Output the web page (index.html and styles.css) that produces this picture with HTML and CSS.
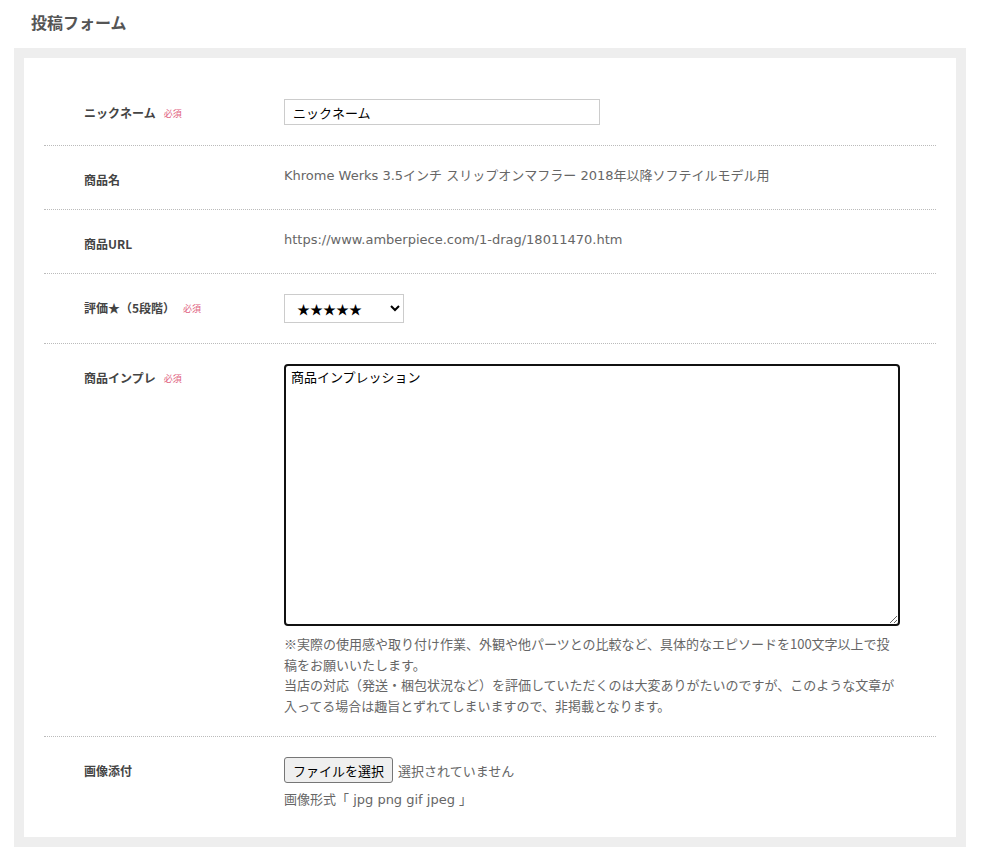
FILE: index.html
```html
<!DOCTYPE html>
<html lang="ja">
<head>
<meta charset="utf-8">
<title>投稿フォーム</title>
<link rel="stylesheet" href="styles.css">
</head>
<body>
<div class="page">
  <h2 class="title">投稿フォーム</h2>
  <div class="box">
    <form class="form">
      <div class="row">
        <div class="label">ニックネーム<span class="req">必須</span></div>
        <div class="value"><input class="text-input" type="text" value="ニックネーム"></div>
      </div>
      <div class="row">
        <div class="label">商品名</div>
        <div class="value"><p class="plain">Khrome Werks 3.5インチ スリップオンマフラー 2018年以降ソフテイルモデル用</p></div>
      </div>
      <div class="row">
        <div class="label">商品URL</div>
        <div class="value"><p class="plain">https://www.amberpiece.com/1-drag/18011470.htm</p></div>
      </div>
      <div class="row">
        <div class="label">評価★（5段階）<span class="req">必須</span></div>
        <div class="value">
          <select class="rating">
            <option>★★★★★</option>
            <option>★★★★</option>
            <option>★★★</option>
            <option>★★</option>
            <option>★</option>
          </select>
        </div>
      </div>
      <div class="row">
        <div class="label">商品インプレ<span class="req">必須</span></div>
        <div class="value">
          <textarea class="impression">商品インプレッション</textarea>
          <p class="note">※実際の使用感や取り付け作業、外観や他パーツとの比較など、具体的なエピソードを100文字以上で投稿をお願いいたします。<br>当店の対応（発送・梱包状況など）を評価していただくのは大変ありがたいのですが、このような文章が入ってる場合は趣旨とずれてしまいますので、非掲載となります。</p>
        </div>
      </div>
      <div class="row row-last">
        <div class="label">画像添付</div>
        <div class="value">
          <div class="file">
            <button type="button" class="file-btn">ファイルを選択</button>
            <span class="file-name">選択されていません</span>
          </div>
          <p class="note note-format">画像形式「 jpg png gif jpeg 」</p>
        </div>
      </div>
    </form>
  </div>
</div>
</body>
</html>
```

FILE: styles.css
```css
* {
  box-sizing: border-box;
}

html, body {
  margin: 0;
  padding: 0;
  background: #fff;
}

body {
  font-family: "Noto Sans CJK JP", sans-serif;
  color: #555;
}

.page {
  width: 952px;
  margin-left: 14px;
  padding-top: 12px;
}

.title {
  margin: 0 0 15px 17px;
  font-size: 16px;
  line-height: 21px;
  font-weight: bold;
  color: #555;
}

.box {
  border: 10px solid #eeeeee;
  background: #fff;
  padding: 21px 20px 6px 20px;
}

.row {
  display: flex;
  padding: 20px 0 20px 40px;
  border-bottom: 1px dotted #bbb;
}

.row-last {
  border-bottom: none;
}

.label {
  width: 200px;
  flex: none;
  font-size: 12px;
  line-height: 18px;
  padding-top: 5px;
  font-weight: bold;
  color: #444;
}

.req {
  font-size: 9px;
  font-weight: normal;
  color: #e0607e;
  margin-left: 8px;
  vertical-align: 1px;
}

.value {
  flex: 1;
  min-width: 0;
}

.plain {
  margin: 0;
  font-family: "DejaVu Sans", "Noto Sans CJK JP", sans-serif;
  font-size: 13px;
  line-height: 20px;
  height: 20px;
  color: #666;
}

.text-input {
  display: block;
  width: 316px;
  height: 26px;
  border: 1px solid #ccc;
  padding: 0 8px;
  font-family: "Noto Sans CJK JP", sans-serif;
  font-size: 13px;
  color: #000;
  background: #fff;
  border-radius: 0;
  outline: none;
}

.rating {
  display: block;
  width: 120px;
  height: 29px;
  border: 1px solid #ccc;
  border-radius: 0;
  background: #fff;
  padding: 0 8px;
  font-family: "Noto Sans CJK JP", sans-serif;
  font-size: 13px;
  color: #000;
  outline: none;
}

.impression {
  display: block;
  width: 616px;
  height: 262px;
  border: 2px solid #111;
  border-radius: 4px;
  padding: 3px 5px;
  font-family: "Noto Sans CJK JP", sans-serif;
  font-size: 13px;
  line-height: 16px;
  color: #000;
  resize: vertical;
  outline: none;
}

.note {
  margin: 8px 0 0;
  width: 616px;
  font-size: 13px;
  line-height: 20.5px;
  color: #666;
}

.file {
  display: flex;
  align-items: center;
  gap: 5px;
}

.file-btn {
  height: 26px;
  padding: 0 8px;
  border: 1px solid #767676;
  border-radius: 3px;
  background: #efefef;
  font-family: "Noto Sans CJK JP", sans-serif;
  font-size: 13px;
  color: #000;
}

.file-name {
  font-size: 13px;
  color: #666;
}

.note-format {
  margin-top: 7px;
  font-family: "DejaVu Sans", "Noto Sans CJK JP", sans-serif;
  height: 20.5px;
}
```
